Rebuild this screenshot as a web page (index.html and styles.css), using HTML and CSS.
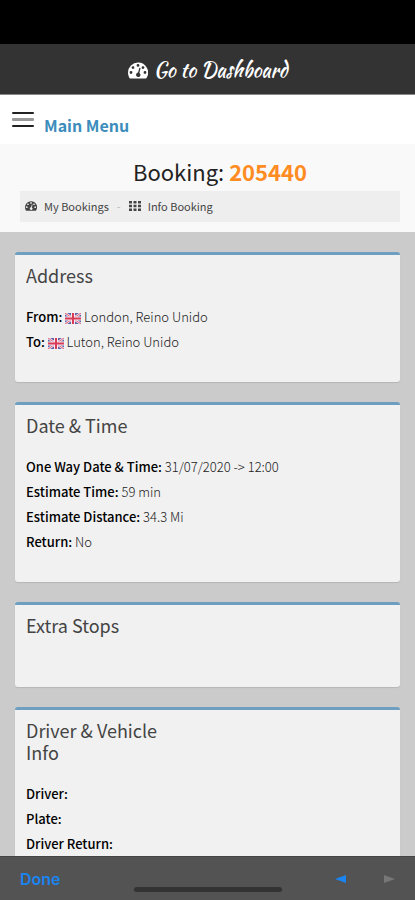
FILE: index.html
```html
<!DOCTYPE html>
<html lang="en">
<head>
  <meta charset="UTF-8">
  <meta name="viewport" content="width=device-width, initial-scale=1.0">
  <title>Booking 205440</title>
  <link rel="stylesheet" href="styles.css">
</head>
<body>
  <!-- Shared icons -->
  <svg class="sprite" aria-hidden="true">
    <symbol id="gauge" viewBox="0 0 20 16">
      <path fill="currentColor" fill-rule="evenodd" d="M10 0A10 10 0 0 0 0 10c0 2 .5 3.800 1.500 5.400.3.400.600.600 1 .600h15c.4 0 .7-.2 1-.6A10 10 0 0 0 10 0zM3 8.600a1.400 1.400 0 1 1 0 2.800 1.400 1.400 0 0 1 0-2.800zM5 3.700a1.400 1.400 0 1 1 0 2.800 1.400 1.400 0 0 1 0-2.800zM10 1.500a1.400 1.400 0 1 1 0 2.800 1.400 1.400 0 0 1 0-2.800zM15 3.700a1.400 1.400 0 1 1 0 2.800 1.400 1.400 0 0 1 0-2.800zM17 8.600a1.400 1.400 0 1 1 0 2.800 1.400 1.400 0 0 1 0-2.800zM11.400 5.300l1.200.3-1.200 4.800a2.200 2.200 0 1 1-1.300-.3z"/>
    </symbol>
    <symbol id="grid" viewBox="0 0 12 10">
      <path fill="currentColor" d="M0 0h3v2.500H0zM4.500 0h3v2.500h-3zM9 0h3v2.500H9zM0 3.700h3v2.500H0zM4.500 3.700h3v2.500h-3zM9 3.700h3v2.500H9zM0 7.400h3v2.500H0zM4.500 7.400h3v2.500h-3zM9 7.400h3v2.500H9z"/>
    </symbol>
    <symbol id="flag-gb" viewBox="0 0 16 11">
      <path fill="#5b64a5" d="M0 0h16v11H0z"/>
      <path stroke="#f3e4ec" stroke-width="2.400" d="M0 0l16 11M16 0L0 11"/>
      <path stroke="#e0627c" stroke-width="1" d="M0 0l16 11M16 0L0 11"/>
      <path fill="#f5eaf0" d="M6 0h4v11H6zM0 3.500h16v4H0z"/>
      <path fill="#d93a55" d="M7 0h2v11H7zM0 4.500h16v2H0z"/>
    </symbol>
  </svg>

  <div class="app">
    <header>
      <div class="status-bar"></div>
      <a class="dashboard-link" href="#">
        <svg class="dashboard-icon"><use href="#gauge"/></svg>
        <span>Go to Dashboard</span>
      </a>
      <nav class="main-menu">
        <button class="menu-toggle" type="button" aria-label="Open menu">
          <span></span><span></span><span></span>
        </button>
        <a class="menu-title" href="#">Main Menu</a>
      </nav>
    </header>

    <main class="content">
      <section class="page-header">
        <h1>Booking: <strong>205440</strong></h1>
        <nav class="breadcrumb">
          <a href="#"><svg class="crumb-icon"><use href="#gauge"/></svg>My Bookings</a>
          <span class="separator">-</span>
          <a href="#"><svg class="crumb-icon"><use href="#grid"/></svg>Info Booking</a>
        </nav>
      </section>

      <div class="boxes">
        <section class="box">
          <h2>Address</h2>
          <p><b>From:</b> <svg class="flag"><use href="#flag-gb"/></svg> London, Reino Unido</p>
          <p><b>To:</b> <svg class="flag"><use href="#flag-gb"/></svg> Luton, Reino Unido</p>
        </section>

        <section class="box">
          <h2>Date &amp; Time</h2>
          <p><b>One Way Date &amp; Time:</b> 31/07/2020 -&gt; 12:00</p>
          <p><b>Estimate Time:</b> 59 min</p>
          <p><b>Estimate Distance:</b> 34.3 Mi</p>
          <p><b>Return:</b> No</p>
        </section>

        <section class="box">
          <h2>Extra Stops</h2>
        </section>

        <section class="box">
          <h2>Driver &amp; Vehicle Info</h2>
          <p><b>Driver:</b></p>
          <p><b>Plate:</b></p>
          <p><b>Driver Return:</b></p>
        </section>
      </div>
    </main>

    <footer class="toolbar">
      <button class="done" type="button">Done</button>
      <div class="history">
        <button class="back" type="button" aria-label="Back">
          <svg viewBox="0 0 11 8"><path fill="currentColor" d="M0 4l11-4v8z"/></svg>
        </button>
        <button class="forward" type="button" aria-label="Forward" disabled>
          <svg viewBox="0 0 11 8"><path fill="currentColor" d="M11 4L0 0v8z"/></svg>
        </button>
      </div>
      <div class="home-indicator"></div>
    </footer>
  </div>
</body>
</html>
```
FILE: styles.css
```css
* {
  box-sizing: border-box;
}

body {
  margin: 0;
  background-color: #cbcbcb;
  color: #444;
  font-family: "Noto Sans CJK SC", "Noto Sans", sans-serif;
  font-size: 13px;
  line-height: 20px;
}

a {
  color: inherit;
  text-decoration: none;
}

button {
  padding: 0;
  border: 0;
  background: none;
}

h1, h2, p {
  margin: 0;
  font-weight: normal;
}

.sprite {
  position: absolute;
  width: 0;
  height: 0;
}

.app {
  display: flex;
  flex-direction: column;
  height: 100vh;
}

/* Top bars */
.status-bar {
  height: 44px;
  background-color: #000;
}

.dashboard-link {
  display: flex;
  align-items: center;
  justify-content: center;
  gap: 6px;
  height: 51px;
  padding-top: 2px;
  border-bottom: 1px solid #888;
  background-color: #333;
  color: #fff;
  font-family: "Kaushan Script", cursive;
  font-size: 20px;
}

.dashboard-icon {
  width: 20px;
  height: 17px;
}

.main-menu {
  display: flex;
  align-items: center;
  gap: 10px;
  height: 49px;
  padding: 0 12px;
  background-color: #fff;
}

.menu-toggle {
  display: flex;
  flex-direction: column;
  gap: 4px;
  width: 22px;
}

.menu-toggle span {
  height: 2px;
  border-radius: 1px;
  background-color: #222;
}

.menu-toggle span:nth-child(2) {
  height: 3px;
  background-color: #999;
}

.menu-title {
  padding-top: 11px;
  color: #3c8dbc;
  font-size: 16px;
  font-weight: bold;
}

/* Booking number and breadcrumb */
.content {
  flex: 1;
  min-height: 0;
  overflow-y: auto;
  scrollbar-width: none;
}

.page-header {
  padding: 13px 15px 10px 20px;
  background-color: #f9f9f9;
}

.page-header h1 {
  padding-left: 20px;
  margin-bottom: 6px;
  color: #222;
  font-size: 22px;
  line-height: 28px;
  text-align: center;
}

.page-header strong {
  color: #ff8c22;
}

.breadcrumb {
  display: flex;
  align-items: center;
  gap: 8px;
  height: 31px;
  padding: 0 5px 2px;
  background-color: #eee;
  font-size: 11px;
}

.breadcrumb a {
  display: flex;
  align-items: center;
  gap: 7px;
}

.crumb-icon {
  width: 12px;
  height: 10px;
}

.separator {
  color: #bbb;
}

/* Boxes */
.boxes {
  display: flex;
  flex-direction: column;
  gap: 20px;
  padding: 20px 15px;
}

.box {
  min-height: 85px;
  padding: 9px 11px 25px;
  border-top: 3px solid #6f9fc0;
  border-radius: 3px;
  background-color: #f1f1f1;
  box-shadow: 0 1px 1px rgba(0, 0, 0, 0.1);
}

.box h2 {
  max-width: 40%;
  margin-bottom: 21px;
  font-size: 18px;
  line-height: 22px;
}

.box p {
  margin-bottom: 5px;
  color: #222;
  font-weight: 300;
}

.box b {
  color: #000;
  font-weight: 500;
}

.flag {
  width: 16px;
  height: 11px;
  vertical-align: -2px;
}

/* Bottom browser bar */
.toolbar {
  position: relative;
  display: flex;
  align-items: center;
  justify-content: space-between;
  height: 44px;
  padding: 0 20px;
  border-top: 1px solid #444;
  background-color: #535353;
}

.done {
  color: #1a84f0;
  font-family: Inter, "Liberation Sans", sans-serif;
  font-size: 16px;
  font-weight: 600;
}

.history {
  display: flex;
  gap: 38px;
}

.history svg {
  display: block;
  width: 11px;
  height: 8px;
}

.back {
  color: #1a84f0;
}

.forward {
  color: #777;
}

.home-indicator {
  position: absolute;
  bottom: 8px;
  left: 50%;
  width: 148px;
  height: 5px;
  border-radius: 3px;
  background-color: #333;
  transform: translateX(-50%);
}
```
